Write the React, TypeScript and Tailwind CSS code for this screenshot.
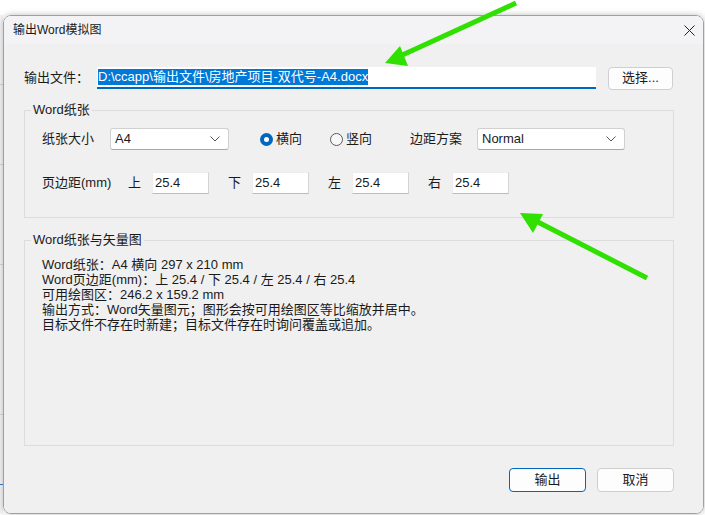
import React from 'react';

const FONT = '"Segoe UI", "Liberation Sans", "Noto Sans CJK SC", sans-serif';

const Chevron: React.FC = () => (
  <svg width="10" height="6" viewBox="0 0 10 6" className="shrink-0">
    <path d="M0.5 0.5 L5 5 L9.5 0.5" fill="none" stroke="#555" strokeWidth="1" />
  </svg>
);

const Select: React.FC<{ value: string; width: string }> = ({ value, width }) => (
  <div
    className={`${width} h-[22px] flex items-center justify-between pl-[4px] pr-[8px] bg-white border border-[#d0d0d0] border-b-[#a8a8a8] rounded-[3px]`}
  >
    <span>{value}</span>
    <Chevron />
  </div>
);

const Radio: React.FC<{ checked?: boolean; label: string; width: string }> = ({ checked, label, width }) => (
  <div className={`${width} flex items-center gap-[3px]`}>
    {checked ? (
      <span className="w-[13px] h-[13px] rounded-full bg-[#0067c0] flex items-center justify-center">
        <span className="w-[5px] h-[5px] rounded-full bg-white" />
      </span>
    ) : (
      <span className="w-[13px] h-[13px] rounded-full border border-[#5a5a5a] bg-[#f7f7f7]" />
    )}
    <span>{label}</span>
  </div>
);

const NumBox: React.FC<{ value: string }> = ({ value }) => (
  <div className="w-[57px] h-[22px] flex items-center pl-[2px] bg-white border border-[#ededed] border-r-[#d4d4d4] border-b-[#bdbdbd]">
    {value}
  </div>
);

const Group: React.FC<{ title: string; className: string; children: React.ReactNode }> = ({
  title,
  className,
  children,
}) => (
  <div className={`w-[650px] border border-[#dcdcdc] flex flex-col ${className}`}>
    <span className="-mt-[9px] ml-[6px] px-[2px] w-fit bg-[#f0f0f0] leading-[16px]">{title}</span>
    {children}
  </div>
);

export default function App() {
  const margins: [string, string][] = [
    ['上', '25.4'],
    ['下', '25.4'],
    ['左', '25.4'],
    ['右', '25.4'],
  ];

  const info = [
    'Word纸张：A4 横向 297 x 210 mm',
    'Word页边距(mm)：上 25.4 / 下 25.4 / 左 25.4 / 右 25.4',
    '可用绘图区：246.2 x 159.2 mm',
    '输出方式：Word矢量图元；图形会按可用绘图区等比缩放并居中。',
    '目标文件不存在时新建；目标文件存在时询问覆盖或追加。',
  ];

  return (
    <div
      className="relative w-[705px] h-[515px] overflow-hidden bg-white text-[13px] text-[#1a1a1a]"
      style={{ fontFamily: FONT }}
    >
      <div className="flex h-full pt-[15px] pb-[1px]">
        {/* bit of the app behind the dialog */}
        <div className="w-[3px] bg-[#f4f4f4] flex flex-col">
          <div className="h-[70px] border-b border-[#d6d6d6]" />
          <div className="h-[80px] border-b border-[#d6d6d6]" />
          <div className="h-[100px] border-b border-[#d6d6d6]" />
          <div className="h-[150px] border-b border-[#d6d6d6]" />
          <div className="h-[70px] border-b border-[#3b78c8]" />
        </div>

        <div className="flex-1 mr-[1px] flex flex-col border border-[#a0a0a0] rounded-[8px] overflow-hidden shadow-[0_0_6px_rgba(0,0,0,0.25)]">
          {/* title bar */}
          <div className="h-[28px] shrink-0 bg-[#f3f3f6] flex items-center justify-between pl-[9px] pr-[8px]">
            <span className="text-[12px]">输出Word模拟图</span>
            <svg width="11" height="11" viewBox="0 0 11 11">
              <path d="M0.5 0.5 L10.5 10.5 M10.5 0.5 L0.5 10.5" stroke="#222" strokeWidth="1" />
            </svg>
          </div>

          {/* body */}
          <div className="flex-1 bg-[#f0f0f0] pl-[20px] flex flex-col">
            <div className="mt-[23px] flex items-center h-[22px]">
              <span className="w-[73px]">输出文件：</span>
              <div className="w-[499px] h-[22px] bg-white border-b-2 border-[#0067c0] flex items-center pl-[1px]">
                <span className="bg-[#0078d7] text-white leading-[16px]">
                  D:\ccapp\输出文件\房地产项目-双代号-A4.docx
                </span>
              </div>
              <div className="ml-[12px] w-[65px] h-[23px] flex items-center justify-center bg-[#fdfdfd] border border-[#cfcfcf] rounded-[4px]">
                选择...
              </div>
            </div>

            <Group title="Word纸张" className="mt-[21px] h-[108px]">
              <div className="mt-[10px] pl-[17px] flex items-center h-[22px]">
                <span className="w-[68px]">纸张大小</span>
                <Select value="A4" width="w-[119px]" />
                <div className="ml-[31px] flex items-center">
                  <Radio checked label="横向" width="w-[70px]" />
                  <Radio label="竖向" width="w-[80px]" />
                </div>
                <span className="w-[67px]">边距方案</span>
                <Select value="Normal" width="w-[148px]" />
              </div>
              <div className="mt-[22px] pl-[17px] flex items-center h-[22px]">
                <span className="w-[86px]">页边距(mm)</span>
                {margins.map(([k, v], i) => (
                  <div key={k} className={`flex items-center ${i > 0 ? 'ml-[19px]' : ''}`}>
                    <span className="w-[24px]">{k}</span>
                    <NumBox value={v} />
                  </div>
                ))}
              </div>
            </Group>

            <Group title="Word纸张与矢量图" className="mt-[22px] h-[206px]">
              <div className="mt-[9px] pl-[17px] flex flex-col">
                {info.map((line) => (
                  <div key={line} className="h-[15px] leading-[15px]">
                    {line}
                  </div>
                ))}
              </div>
            </Group>

            <div className="w-[650px] mt-[22px] flex justify-end gap-[11px]">
              <div className="w-[77px] h-[24px] flex items-center justify-center bg-[#fdfdfd] border border-[#0067c0] rounded-[4px]">
                输出
              </div>
              <div className="w-[77px] h-[24px] flex items-center justify-center bg-[#fdfdfd] border border-[#cfcfcf] rounded-[4px]">
                取消
              </div>
            </div>
          </div>
        </div>
      </div>

      {/* annotation arrows drawn on top of the screenshot */}
      <svg className="absolute inset-0 pointer-events-none" width="705" height="515" viewBox="0 0 705 515">
        <line x1="516" y1="3" x2="398" y2="57" stroke="#2fe000" strokeWidth="5" />
        <polygon points="385,63 400,46 408,66" fill="#2fe000" />
        <line x1="647" y1="278" x2="532" y2="219" stroke="#2fe000" strokeWidth="5" />
        <polygon points="520,213 543,214 533,233" fill="#2fe000" />
      </svg>
    </div>
  );
}
